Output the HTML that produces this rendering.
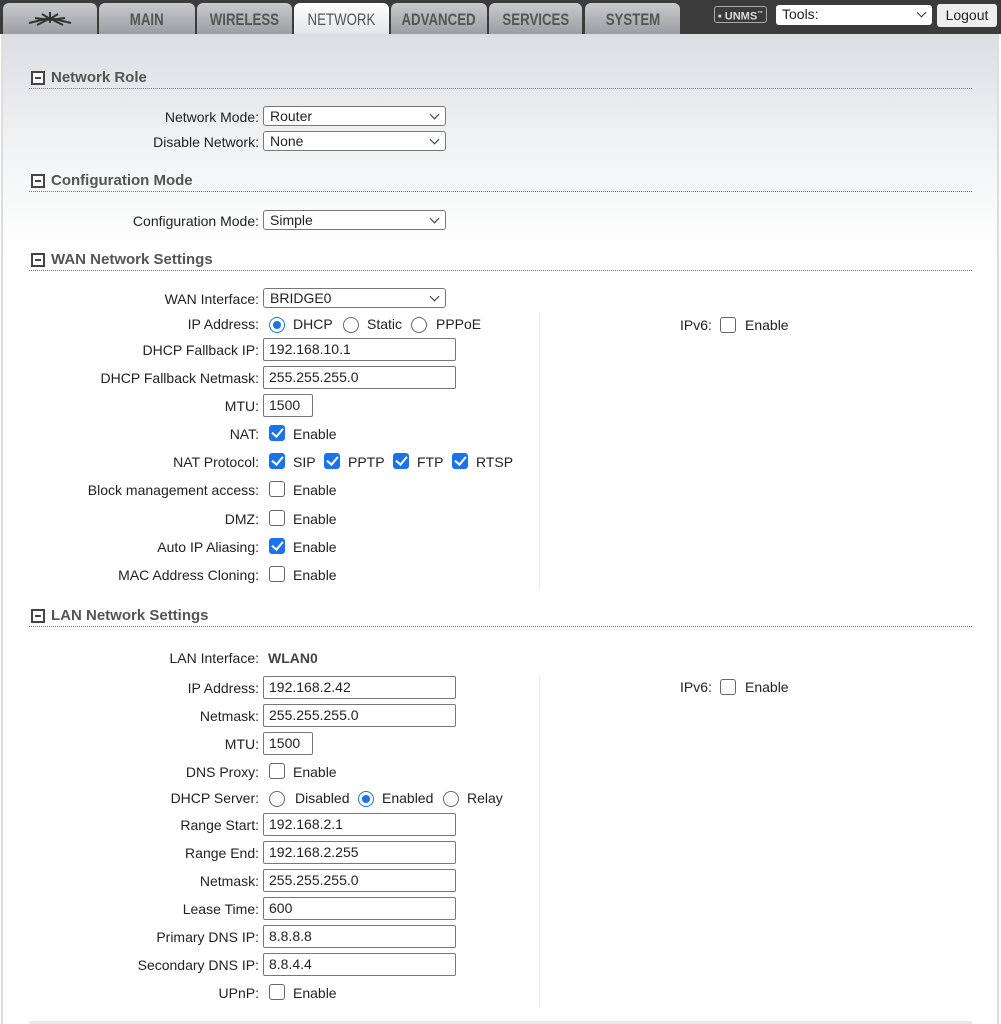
<!DOCTYPE html>
<html><head><meta charset="utf-8"><style>
*{box-sizing:border-box;margin:0;padding:0}
body{width:1001px;height:1024px;overflow:hidden;font-family:"Liberation Sans",Arial,sans-serif;font-size:14px;color:#222;background:#fff;position:relative}
#hdr{position:absolute;left:0;top:0;width:1001px;height:34px;background:#3b3b3b}
.tab{position:absolute;top:3px;height:31px;background:linear-gradient(#c9cacd,#9c9ea3);border-radius:6px 6px 0 0;color:#555;font:bold 17px "Liberation Sans",sans-serif;text-align:center;line-height:33px}
.tab span{display:inline-block;transform:scaleX(.78)}
.tab.act{background:linear-gradient(#fff,#e4e5e8);color:#555;font-weight:normal}
#content{position:absolute;left:1px;top:34px;width:998px;height:990px;background:linear-gradient(#dcdee2 0px,#f3f4f5 120px,#fff 220px);border-left:2px solid #ddd;border-right:2px solid #ddd}
.a{position:absolute;white-space:nowrap;line-height:18px}
.l{position:absolute;right:742px;white-space:nowrap;font-size:14px;line-height:18px}
.h{position:absolute;left:51px;font-weight:bold;font-size:15px;color:#555;line-height:18px}
.hb{position:absolute;left:31px;width:14px;height:14px;border:2px solid #444;background:#fff}
.hb:after{content:"";position:absolute;left:2px;top:4px;width:6px;height:2px;background:#444}
.hl{position:absolute;left:29px;width:943px;border-top:1px dotted #777}
.sel{position:absolute;left:263px;width:183px;height:20px;border:1px solid #777;border-radius:3px;background:#fff;padding-left:6px;line-height:18px;font-size:14px}
.sel:after{content:"";position:absolute;right:7px;top:4px;width:6px;height:6px;border-right:1.3px solid #333;border-bottom:1.3px solid #333;transform:rotate(45deg)}
.in{position:absolute;left:263px;width:193px;height:23px;border:1px solid #777;border-radius:2px;background:#fff;padding-left:5px;line-height:21px;font-size:14px}
.cb{position:absolute;width:16px;height:16px;border:1.3px solid #666;border-radius:3px;background:#fff}
.cb.on{background:#1a73e8;border-color:#1a73e8}
.cb.on:after{content:"";position:absolute;left:4px;top:0px;width:5px;height:9px;border-right:2px solid #fff;border-bottom:2px solid #fff;transform:rotate(40deg)}
.rd{position:absolute;width:16px;height:16px;border:1.3px solid #666;border-radius:50%;background:#fff}
.rd.on{border:1.5px solid #1a73e8}
.rd.on:after{content:"";position:absolute;left:2.5px;top:2.5px;width:8px;height:8px;border-radius:50%;background:#1a73e8}
.vs{position:absolute;left:539px;width:1px;background:#ececec}
</style></head><body>
<div id="hdr">
<div class="tab" style="left:3px;width:94px"><svg width="50" height="20" viewBox="0 0 50 20" style="margin-top:6px"><path d="M4 14 L25 9 L46 14 M10 9 L25 11 L40 9 M25 3 L25 14 M17 5 L25 10 L33 5 M12 16 L22 11 M38 16 L28 11" stroke="#333" stroke-width="2" fill="none"/></svg></div>
<div class="tab" style="left:99px;width:96px"><span>MAIN</span></div>
<div class="tab" style="left:197px;width:95px"><span>WIRELESS</span></div>
<div class="tab act" style="left:294px;width:95px"><span>NETWORK</span></div>
<div class="tab" style="left:391px;width:96px"><span>ADVANCED</span></div>
<div class="tab" style="left:489px;width:93px"><span>SERVICES</span></div>
<div class="tab" style="left:585px;width:95px"><span>SYSTEM</span></div>
<div class="a" style="left:714px;top:6px;width:53px;height:17px;border:1.5px solid #aaa;border-radius:3px;color:#ddd;font:bold 11px 'Liberation Sans';line-height:14px;text-align:center">▪ UNMS<sup style="font-size:6px">™</sup></div>
<div class="sel" style="left:776px;top:5px;width:156px;height:20px;border:none">Tools:</div>
<div class="a" style="left:937px;top:4px;width:60px;height:23px;background:#eee;border-radius:3px;text-align:center;line-height:23px;font-size:14px">Logout</div>
</div>
<div id="content"></div>

<div class="hb" style="top:71px"></div><div class="h" style="top:69px">Network Role</div><div class="hl" style="top:88px"></div>
<div class="l" style="top:108px">Network Mode:</div><div class="sel" style="top:106px">Router</div>
<div class="l" style="top:133px">Disable Network:</div><div class="sel" style="top:131px">None</div>

<div class="hb" style="top:174px"></div><div class="h" style="top:172px">Configuration Mode</div><div class="hl" style="top:191px"></div>
<div class="l" style="top:212px">Configuration Mode:</div><div class="sel" style="top:210px">Simple</div>

<div class="hb" style="top:253px"></div><div class="h" style="top:251px">WAN Network Settings</div><div class="hl" style="top:270px"></div>
<div class="vs" style="top:313px;height:277px"></div>
<div class="l" style="top:290px">WAN Interface:</div><div class="sel" style="top:288px">BRIDGE0</div>
<div class="l" style="top:315px">IP Address:</div>
<div class="rd on" style="left:269px;top:317px"></div><div class="a" style="left:293px;top:315px">DHCP</div>
<div class="rd" style="left:343px;top:317px"></div><div class="a" style="left:367px;top:315px">Static</div>
<div class="rd" style="left:411px;top:317px"></div><div class="a" style="left:436px;top:315px">PPPoE</div>
<div class="a" style="left:680px;top:316px">IPv6:</div><div class="cb" style="left:720px;top:317px"></div><div class="a" style="left:745px;top:316px">Enable</div>
<div class="l" style="top:341px">DHCP Fallback IP:</div><div class="in" style="top:338px">192.168.10.1</div>
<div class="l" style="top:369px">DHCP Fallback Netmask:</div><div class="in" style="top:366px">255.255.255.0</div>
<div class="l" style="top:397px">MTU:</div><div class="in" style="top:394px;width:50px">1500</div>
<div class="l" style="top:425px">NAT:</div><div class="cb on" style="left:269px;top:425px"></div><div class="a" style="left:293px;top:425px">Enable</div>
<div class="l" style="top:453px">NAT Protocol:</div>
<div class="cb on" style="left:269px;top:453px"></div><div class="a" style="left:293px;top:453px">SIP</div>
<div class="cb on" style="left:324px;top:453px"></div><div class="a" style="left:348px;top:453px">PPTP</div>
<div class="cb on" style="left:393px;top:453px"></div><div class="a" style="left:417px;top:453px">FTP</div>
<div class="cb on" style="left:452px;top:453px"></div><div class="a" style="left:476px;top:453px">RTSP</div>
<div class="l" style="top:481px">Block management access:</div><div class="cb" style="left:269px;top:481px"></div><div class="a" style="left:293px;top:481px">Enable</div>
<div class="l" style="top:510px">DMZ:</div><div class="cb" style="left:269px;top:510px"></div><div class="a" style="left:293px;top:510px">Enable</div>
<div class="l" style="top:538px">Auto IP Aliasing:</div><div class="cb on" style="left:269px;top:538px"></div><div class="a" style="left:293px;top:538px">Enable</div>
<div class="l" style="top:566px">MAC Address Cloning:</div><div class="cb" style="left:269px;top:566px"></div><div class="a" style="left:293px;top:566px">Enable</div>

<div class="hb" style="top:609px"></div><div class="h" style="top:607px">LAN Network Settings</div><div class="hl" style="top:626px"></div>
<div class="vs" style="top:675px;height:333px"></div>
<div class="l" style="top:649px">LAN Interface:</div><div class="a" style="left:268px;top:649px;font-weight:bold;color:#444">WLAN0</div>
<div class="l" style="top:679px">IP Address:</div><div class="in" style="top:676px">192.168.2.42</div>
<div class="a" style="left:680px;top:678px">IPv6:</div><div class="cb" style="left:720px;top:679px"></div><div class="a" style="left:745px;top:678px">Enable</div>
<div class="l" style="top:707px">Netmask:</div><div class="in" style="top:704px">255.255.255.0</div>
<div class="l" style="top:735px">MTU:</div><div class="in" style="top:732px;width:50px">1500</div>
<div class="l" style="top:763px">DNS Proxy:</div><div class="cb" style="left:269px;top:763px"></div><div class="a" style="left:293px;top:763px">Enable</div>
<div class="l" style="top:789px">DHCP Server:</div>
<div class="rd" style="left:269px;top:791px"></div><div class="a" style="left:295px;top:789px">Disabled</div>
<div class="rd on" style="left:358px;top:791px"></div><div class="a" style="left:382px;top:789px">Enabled</div>
<div class="rd" style="left:443px;top:791px"></div><div class="a" style="left:467px;top:789px">Relay</div>
<div class="l" style="top:816px">Range Start:</div><div class="in" style="top:813px">192.168.2.1</div>
<div class="l" style="top:844px">Range End:</div><div class="in" style="top:841px">192.168.2.255</div>
<div class="l" style="top:872px">Netmask:</div><div class="in" style="top:869px">255.255.255.0</div>
<div class="l" style="top:900px">Lease Time:</div><div class="in" style="top:897px">600</div>
<div class="l" style="top:928px">Primary DNS IP:</div><div class="in" style="top:925px">8.8.8.8</div>
<div class="l" style="top:956px">Secondary DNS IP:</div><div class="in" style="top:953px">8.8.4.4</div>
<div class="l" style="top:984px">UPnP:</div><div class="cb" style="left:269px;top:984px"></div><div class="a" style="left:293px;top:984px">Enable</div>
<div class="a" style="left:29px;top:1021px;width:943px;height:3px;background:#e8e8e8"></div>
</body></html>
